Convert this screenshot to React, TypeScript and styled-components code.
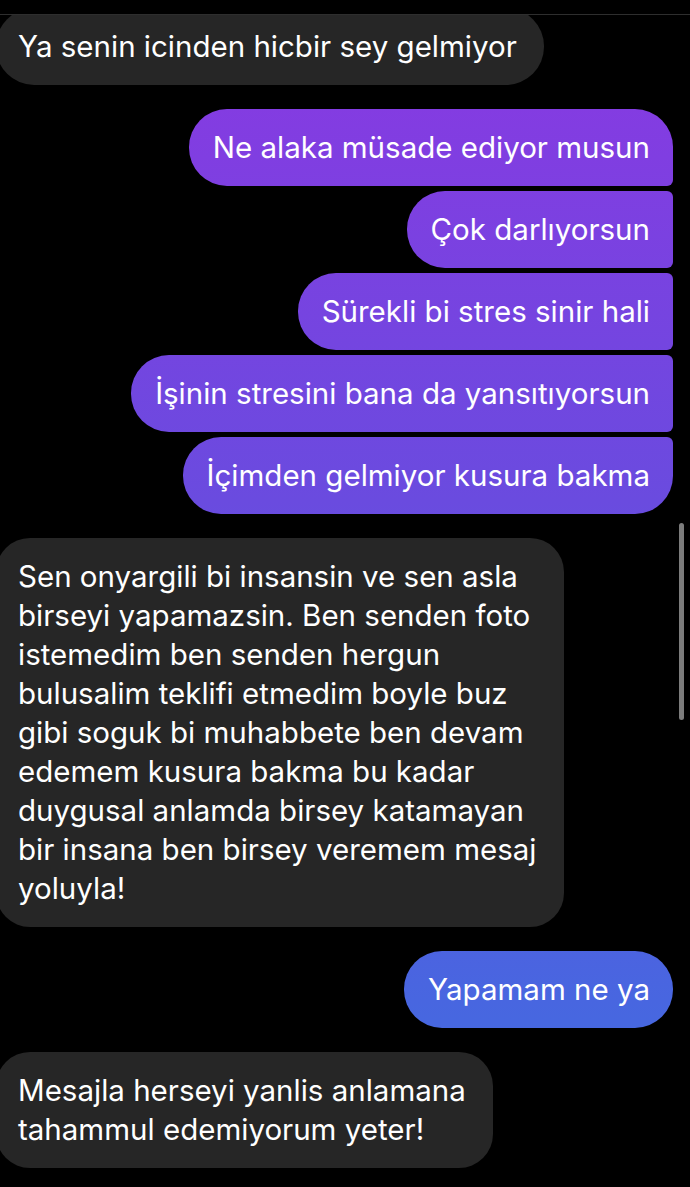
import React from "react";
import styled, { createGlobalStyle, css } from "styled-components";

const GlobalStyle = createGlobalStyle`
  html, body {
    margin: 0;
    padding: 0;
    background: #000;
  }
  body {
    font-family: Inter, "Noto Sans", "Liberation Sans", sans-serif;
    -webkit-font-smoothing: antialiased;
  }
`;

const Screen = styled.div`
  position: relative;
  width: 690px;
  height: 1187px;
  background: #000;
  overflow: hidden;
  display: flex;
  flex-direction: column;
`;

const TopBar = styled.div`
  height: 14px;
  flex-shrink: 0;
  background: #000;
  border-bottom: 1px solid #2e2e2e;
  position: relative;
  z-index: 2;
`;

const Thread = styled.div`
  display: flex;
  flex-direction: column;
  gap: 24px;
  margin-top: -7px;
  padding: 0 17px 0 0;
`;

const Group = styled.div<{ $mine?: boolean }>`
  display: flex;
  flex-direction: column;
  gap: 5px;
  align-items: ${(p) => (p.$mine ? "flex-end" : "flex-start")};
`;

type Pos = "single" | "first" | "middle" | "last";

const BIG = 38;
const SMALL = 6;

const mineRadius = (pos: Pos, r: number) => {
  switch (pos) {
    case "first":
      return `${r}px ${r}px ${SMALL}px ${r}px`;
    case "middle":
      return `${r}px ${SMALL}px ${SMALL}px ${r}px`;
    case "last":
      return `${r}px ${SMALL}px ${r}px ${r}px`;
    default:
      return `${r}px`;
  }
};

const Bubble = styled.div<{ $mine?: boolean; $pos?: Pos; $radius?: number }>`
  box-sizing: border-box;
  font-size: 29.5px;
  font-weight: 400;
  line-height: 39px;
  color: #fff;
  white-space: nowrap;
  border-radius: ${(p) => mineRadius(p.$pos ?? "single", p.$radius ?? BIG)};
  ${(p) =>
    p.$mine
      ? css`
          padding: 19px 23px 19px 24px;
          background: linear-gradient(180deg, #8a38e2 0px, #6a4bdf 500px, #4866e0 1000px, #3f6fe0 1187px);
          background-attachment: fixed;
        `
      : css`
          padding: 19px 27px 19px 22px;
          margin-left: -4px;
          background: #262626;
        `}
`;

const Scrollbar = styled.div`
  position: absolute;
  right: 6px;
  top: 523px;
  width: 5px;
  height: 197px;
  border-radius: 3px;
  background: #7c7c7c;
`;

const longText = [
  "Sen onyargili bi insansin ve sen asla",
  "birseyi yapamazsin. Ben senden foto",
  "istemedim ben senden hergun",
  "bulusalim teklifi etmedim boyle buz",
  "gibi soguk bi muhabbete ben devam",
  "edemem kusura bakma bu kadar",
  "duygusal anlamda birsey katamayan",
  "bir insana ben birsey veremem mesaj",
  "yoluyla!",
];

const withBreaks = (lines: string[]) =>
  lines.map((line, i) => (
    <React.Fragment key={i}>
      {line}
      {i < lines.length - 1 && <br />}
    </React.Fragment>
  ));

export default function App() {
  return (
    <>
      <GlobalStyle />
      <Screen>
        <TopBar />
        <Thread>
          <Group>
            <Bubble $pos="single">Ya senin icinden hicbir sey gelmiyor</Bubble>
          </Group>
          <Group $mine>
            <Bubble $mine $pos="first">Ne alaka müsade ediyor musun</Bubble>
            <Bubble $mine $pos="middle">Çok darlıyorsun</Bubble>
            <Bubble $mine $pos="middle">Sürekli bi stres sinir hali</Bubble>
            <Bubble $mine $pos="middle">İşinin stresini bana da yansıtıyorsun</Bubble>
            <Bubble $mine $pos="last">İçimden gelmiyor kusura bakma</Bubble>
          </Group>
          <Group>
            <Bubble $pos="single" $radius={34}>
              {withBreaks(longText)}
            </Bubble>
          </Group>
          <Group $mine>
            <Bubble $mine $pos="single">Yapamam ne ya</Bubble>
          </Group>
          <Group>
            <Bubble $pos="single" $radius={34}>
              {withBreaks(["Mesajla herseyi yanlis anlamana", "tahammul edemiyorum yeter!"])}
            </Bubble>
          </Group>
        </Thread>
        <Scrollbar />
      </Screen>
    </>
  );
}
